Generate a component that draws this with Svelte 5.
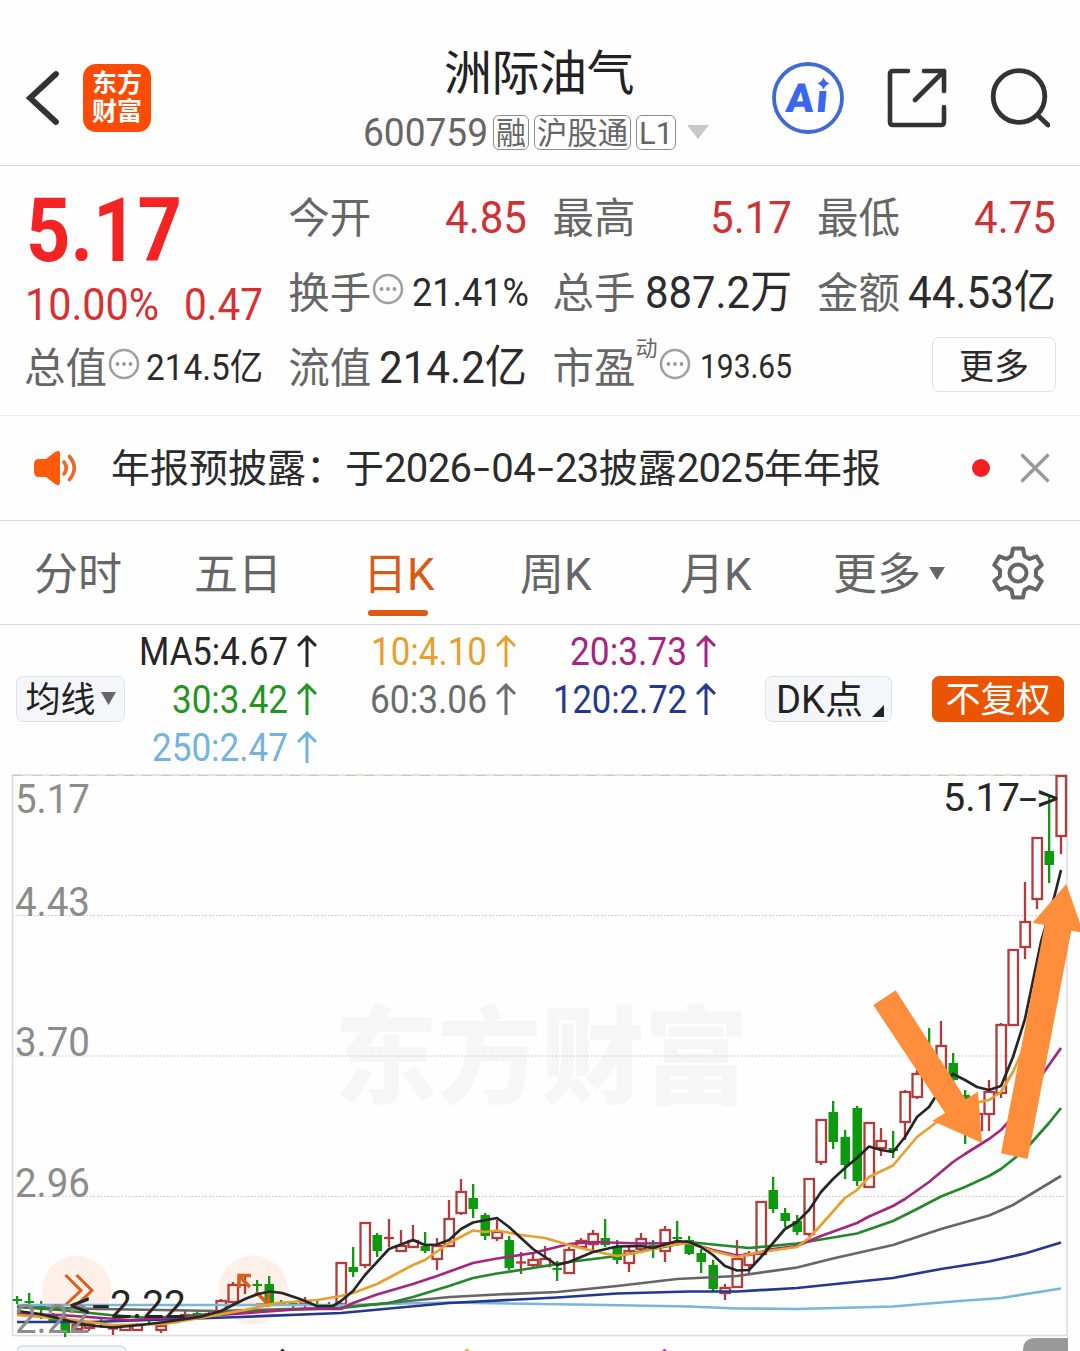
<script>
  const tags = [
    { text: '融', width: 30 },
    { text: '沪股通', width: 91 },
    { text: 'L1', width: 34 },
  ]

  const tabs = ['分时', '五日', '日K', '周K', '月K', '更多']
  let activeTab = $state('日K')

  const averages = [
    { text: 'MA5:4.67', width: 149, color: '#262626' },
    { text: '10:4.10', width: 116, color: '#e5a02f' },
    { text: '20:3.73', width: 117, color: '#a62580' },
    { text: '30:3.42', width: 116, color: '#1f961f' },
    { text: '60:3.06', width: 117, color: '#6b6b6b' },
    { text: '120:2.72', width: 134, color: '#24388f' },
    { text: '250:2.47', width: 136, color: '#72b4de' },
  ]

  const axis = [
    { text: '5.17', y: 813 },
    { text: '4.43', y: 916 },
    { text: '3.70', y: 1056 },
    { text: '2.96', y: 1197 },
    { text: '2.22', y: 1333 },
  ]

  // x, high, body top, body bottom, low, rising
  const candles = [
    [17, 1296, 1299, 1301, 1304, 0],
    [29, 1293, 1301, 1303, 1306, 0],
    [41, 1301, 1304, 1307, 1319, 0],
    [53, 1313, 1316, 1322, 1323, 0],
    [65, 1317, 1323, 1333, 1337, 0],
    [77, 1321, 1325, 1329, 1330, 1],
    [89, 1322, 1324, 1328, 1331, 1],
    [101, 1319, 1322, 1324, 1328, 0],
    [113, 1324, 1328, 1329, 1335, 1],
    [125, 1325, 1326, 1330, 1331, 1],
    [137, 1323, 1325, 1330, 1331, 1],
    [149, 1316, 1319, 1321, 1324, 0],
    [161, 1324, 1326, 1330, 1333, 1],
    [173, 1316, 1319, 1322, 1324, 1],
    [185, 1311, 1314, 1316, 1318, 1],
    [197, 1310, 1313, 1315, 1317, 0],
    [209, 1310, 1313, 1315, 1317, 1],
    [221, 1299, 1301, 1312, 1313, 1],
    [233, 1282, 1285, 1302, 1304, 1],
    [245, 1274, 1284, 1286, 1294, 1],
    [257, 1280, 1284, 1286, 1292, 0],
    [269, 1276, 1284, 1304, 1305, 0],
    [281, 1300, 1302, 1304, 1306, 0],
    [293, 1301, 1303, 1305, 1308, 0],
    [305, 1297, 1301, 1304, 1309, 1],
    [317, 1301, 1304, 1306, 1309, 0],
    [329, 1302, 1305, 1307, 1310, 1],
    [341, 1262, 1263, 1304, 1304, 1],
    [353, 1247, 1267, 1272, 1277, 0],
    [365, 1222, 1223, 1265, 1268, 1],
    [377, 1233, 1235, 1251, 1257, 0],
    [389, 1219, 1237, 1239, 1247, 1],
    [401, 1230, 1246, 1251, 1252, 1],
    [413, 1225, 1241, 1247, 1248, 1],
    [425, 1232, 1246, 1251, 1253, 0],
    [437, 1238, 1246, 1259, 1270, 1],
    [449, 1200, 1219, 1246, 1247, 1],
    [461, 1179, 1192, 1213, 1215, 1],
    [473, 1184, 1198, 1209, 1218, 0],
    [485, 1213, 1215, 1236, 1240, 0],
    [497, 1220, 1232, 1238, 1241, 1],
    [509, 1236, 1240, 1268, 1270, 0],
    [521, 1252, 1262, 1263, 1274, 1],
    [533, 1253, 1260, 1265, 1267, 1],
    [545, 1246, 1259, 1266, 1267, 1],
    [557, 1261, 1268, 1270, 1281, 0],
    [569, 1247, 1250, 1273, 1274, 1],
    [581, 1238, 1241, 1247, 1248, 1],
    [593, 1230, 1234, 1244, 1251, 1],
    [605, 1219, 1238, 1245, 1247, 0],
    [617, 1240, 1246, 1260, 1264, 0],
    [629, 1247, 1251, 1263, 1272, 1],
    [641, 1233, 1239, 1249, 1251, 1],
    [653, 1240, 1245, 1249, 1258, 0],
    [665, 1226, 1230, 1251, 1262, 1],
    [677, 1221, 1237, 1238, 1243, 0],
    [689, 1236, 1240, 1254, 1255, 0],
    [701, 1249, 1253, 1262, 1273, 0],
    [713, 1260, 1265, 1289, 1292, 0],
    [725, 1284, 1288, 1293, 1300, 1],
    [737, 1240, 1259, 1287, 1288, 1],
    [749, 1251, 1254, 1265, 1273, 1],
    [761, 1201, 1202, 1254, 1255, 1],
    [773, 1177, 1190, 1209, 1213, 0],
    [785, 1208, 1213, 1221, 1227, 0],
    [797, 1215, 1221, 1232, 1235, 0],
    [809, 1178, 1179, 1234, 1236, 1],
    [821, 1119, 1120, 1162, 1165, 1],
    [833, 1101, 1112, 1142, 1149, 0],
    [845, 1130, 1137, 1165, 1179, 0],
    [857, 1106, 1108, 1181, 1186, 0],
    [869, 1122, 1123, 1187, 1188, 1],
    [881, 1128, 1141, 1148, 1156, 1],
    [893, 1131, 1148, 1151, 1158, 0],
    [905, 1090, 1092, 1122, 1140, 1],
    [917, 1070, 1074, 1097, 1099, 1],
    [929, 1028, 1050, 1064, 1070, 0],
    [941, 1021, 1046, 1080, 1084, 1],
    [953, 1053, 1063, 1080, 1084, 0],
    [965, 1090, 1095, 1125, 1144, 0],
    [977, 1108, 1114, 1130, 1131, 1],
    [989, 1080, 1092, 1114, 1131, 1],
    [1001, 1023, 1025, 1093, 1098, 1],
    [1013, 949, 950, 1025, 1026, 1],
    [1025, 882, 922, 947, 959, 1],
    [1037, 837, 838, 899, 909, 1],
    [1049, 795, 851, 865, 883, 0],
    [1061, 775, 776, 836, 854, 1],
  ]

  const lines = [
    {
      color: '#7ab6d8',
      points: '17,1305 341,1305 449,1302.5 509,1303.5 605,1305 689,1306.5 737,1308.5 797,1309 893,1306.5 953,1301.5 1001,1298 1061,1288.5',
    },
    {
      color: '#24388f',
      points: '17,1322 90,1322 150,1320 240,1317 341,1313 449,1303 557,1297.5 617,1293.5 689,1291.5 737,1291.5 797,1288 893,1278 941,1269 989,1261.5 1025,1253.5 1061,1242.5',
    },
    {
      color: '#666666',
      points: '17,1307 100,1309 220,1311 341,1307.5 450,1297 497,1294.5 557,1292 617,1286 677,1279 737,1276 797,1267.5 833,1258.5 893,1245 941,1229 989,1215.5 1013,1205 1061,1176',
    },
    {
      color: '#22882a',
      points: '17,1307 60,1310 110,1315 150,1318 260,1311 341,1308 389,1303 413,1297 449,1286 473,1278 497,1273.5 533,1268 569,1262 617,1256 653,1249 689,1242 713,1244.5 749,1248 797,1243.5 857,1233.5 893,1221 917,1209 941,1196.5 965,1187 989,1176 1001,1169 1025,1150 1049,1123 1061,1108',
    },
    {
      color: '#a62580',
      points: '17,1314 60,1315 130,1320 220,1315 300,1309 341,1309 353,1303 377,1294.5 413,1284 437,1276 473,1263 497,1258.5 533,1253 569,1244 593,1242 641,1243.5 689,1243 713,1250 737,1255.5 749,1255 773,1249 797,1246 821,1236 857,1223 869,1216.5 893,1206 905,1199 929,1182 953,1162 965,1154 989,1139 1001,1130 1013,1117 1037,1082 1061,1048',
    },
    {
      color: '#e5a02f',
      points: '17,1315 65,1319 113,1325 165,1324 200,1318 245,1310 277,1303 317,1300 341,1296 353,1293 377,1284 413,1265 425,1260 449,1243 473,1230.5 485,1232 497,1230.5 521,1235 545,1238 569,1245 593,1251 617,1256 641,1252 665,1246 689,1243 713,1251 737,1257 761,1252 797,1247 809,1238 821,1225 845,1198 857,1190 869,1177 893,1165.5 917,1137 941,1119 965,1105 989,1100 1001,1092 1013,1072 1021,1054 1040,1000',
    },
    {
      color: '#262626',
      points: '17,1311 40,1314 65,1320 85,1325 113,1327.5 140,1325 165,1322 200,1317 221,1311 245,1299 258,1294 270,1291.5 282,1293 300,1299 317,1306 333,1306 341,1301 353,1291 365,1275 389,1249 413,1240 425,1245 437,1244.5 449,1240 461,1229 473,1222.5 497,1218 509,1227 533,1249 557,1265 569,1262 593,1252 617,1246.5 641,1246 653,1248 677,1241 689,1242 701,1247 713,1255 725,1266 737,1270.5 749,1270 761,1257 785,1229 797,1222 809,1210 821,1192 833,1179 845,1168 857,1158 869,1146.5 881,1150 893,1152 905,1137 917,1117 929,1107 941,1088 953,1074 965,1080 977,1087 989,1090 1001,1086 1013,1057 1025,1019 1041,942 1054,898 1061,870',
    },
  ]
</script>

<!-- text squeezed to a fixed width, so numbers keep their column -->
{#snippet num(text, width, size)}
  <svg class="num" {width} height={size} font-size={size}>
    <text x="0" y={size * 0.856} textLength={width} lengthAdjust="spacingAndGlyphs">{text}</text>
  </svg>
{/snippet}

{#snippet info()}
  <svg class="info" width="32" height="32" viewBox="0 0 32 32">
    <circle cx="16" cy="16" r="14" fill="none" stroke="#a0a0a0" stroke-width="2.6" />
    <circle cx="9.5" cy="16" r="1.9" />
    <circle cx="16" cy="16" r="1.9" />
    <circle cx="22.5" cy="16" r="1.9" />
  </svg>
{/snippet}

<div class="page">
  <header class="top">
    <div class="side">
      <svg width="36" height="60" viewBox="0 0 36 60" fill="none" stroke="#333" stroke-width="5.8" stroke-linecap="round">
        <polyline points="31,6 5,30 31,54" />
      </svg>
      <div class="logo"><span>东方</span><span>财富</span></div>
    </div>

    <div class="title">
      <h1>洲际油气</h1>
      <div class="sub">
        {@render num('600759', 125, 38)}
        <div class="tags">
          {#each tags as tag}
            <span class="tag">{@render num(tag.text, tag.width, 31)}</span>
          {/each}
        </div>
        <svg width="22" height="14" viewBox="0 0 22 14"><path d="M0 0h22L11 14z" fill="#c8c8c8" /></svg>
      </div>
    </div>

    <div class="side actions">
      <svg width="72" height="72" viewBox="0 0 72 72">
        <circle cx="36" cy="36" r="34" fill="none" stroke="#3f69d6" stroke-width="3.8" />
        <g class="ai" transform="translate(13 50) skewX(-5)">
          <text textLength="28" lengthAdjust="spacingAndGlyphs">A</text>
          <text x="30" textLength="12" lengthAdjust="spacingAndGlyphs">ı</text>
        </g>
        <path d="M51.500 15.500Q53.200 19.800 57.500 21.500Q53.200 23.200 51.500 27.500Q49.800 23.200 45.500 21.500Q49.800 19.800 51.500 15.500z" fill="#3a66f0" />
      </svg>
      <svg width="60" height="60" viewBox="0 0 60 60" fill="none" stroke="#333" stroke-width="4.6" stroke-linecap="round" stroke-linejoin="round">
        <path d="M21 3H6Q3 3 3 6V54Q3 57 6 57H54Q57 57 57 54V39" />
        <path d="M37 3H57V23M57 3L28 32" />
      </svg>
      <svg width="60" height="60" viewBox="0 0 60 60" fill="none" stroke="#333" stroke-width="4.8" stroke-linecap="round">
        <circle cx="29" cy="28.500" r="25.800" />
        <path d="M48 47.500L58 57" />
      </svg>
    </div>
  </header>

  <section class="quote">
    <div class="price">
      <div class="last">{@render num('5.17', 156, 89)}</div>
      <div class="change">
        {@render num('10.00%', 134, 44)}
        {@render num('0.47', 79, 44)}
      </div>
    </div>
    <div class="cell"><label>今开</label><b class="up">{@render num('4.85', 82, 45)}</b></div>
    <div class="cell"><label>最高</label><b class="up">{@render num('5.17', 82, 45)}</b></div>
    <div class="cell"><label>最低</label><b class="up">{@render num('4.75', 82, 45)}</b></div>
    <div class="cell wide"><label>换手</label>{@render info()}<b>{@render num('21.41%', 117, 38)}</b></div>
    <div class="cell"><label>总手</label><b>{@render num('887.2万', 147, 45)}</b></div>
    <div class="cell"><label>金额</label><b>{@render num('44.53亿', 148, 45)}</b></div>
    <div class="cell"><label>总值</label>{@render info()}<b>{@render num('214.5亿', 117, 36)}</b></div>
    <div class="cell"><label>流值</label><b>{@render num('214.2亿', 148, 45)}</b></div>
    <div class="cell"><label>市盈</label><sup>动</sup>{@render info()}<b>{@render num('193.65', 92, 33)}</b></div>
    <div class="cell"><button class="more">更多</button></div>
  </section>

  <section class="notice">
    <svg width="46" height="36" viewBox="0 0 46 36">
      <path d="M6 9H13L22 2Q27-1 27 4V32Q27 37 22 34L13 27H6Q1 27 1 22V14Q1 9 6 9z" fill="#ff5a0a" />
      <path d="M31 12Q35.500 18 31 24M36.500 6.500Q46 18 36.500 29.500" fill="none" stroke="#e8692a" stroke-width="3.600" stroke-linecap="round" />
    </svg>
    <p>年报预披露：于<i>2026<u>-</u>04<u>-</u>23</i>披露<i>2025</i>年年报</p>
    <span class="dot"></span>
    <svg width="30" height="30" viewBox="0 0 30 30" stroke="#999" stroke-width="3.400"><path d="M1.500 1.500L28.500 28.500M28.500 1.500L1.500 28.500" /></svg>
  </section>

  <nav class="tabs">
    {#each tabs as tab}
      <button class="tab" class:active={tab === activeTab} onclick={() => (activeTab = tab)}>
        <span>{tab}</span>
        {#if tab === '更多'}
          <svg width="16" height="13" viewBox="0 0 16 13"><path d="M0 0H16L8 13z" fill="#666" /></svg>
        {/if}
      </button>
    {/each}
    <svg width="54" height="54" viewBox="-27 -27 54 54" fill="none" stroke="#666" stroke-width="4" stroke-linejoin="round">
      <path d="M-6.500-17L-5-24.500H5L6.500-17L11.500-14.100L18.700-16.600L23.700-7.900L18-2.900V2.900L23.700 7.900L18.700 16.600L11.500 14.100L6.500 17L5 24.500H-5L-6.500 17L-11.500 14.100L-18.700 16.600L-23.700 7.900L-18 2.900V-2.900L-23.700-7.900L-18.700-16.600L-11.500-14.100z" />
      <circle r="8.500" />
    </svg>
  </nav>

  <section class="indicators">
    <button class="chip">
      <span>均线</span>
      <svg width="15" height="13" viewBox="0 0 15 13"><path d="M0 0H15L7.500 13z" fill="#666" /></svg>
    </button>
    <div class="averages">
      {#each averages as ma}
        <span style="color: {ma.color}">
          {@render num(ma.text, ma.width, 38)}
          <svg width="20" height="32" viewBox="0 0 20 32" fill="none" stroke="currentColor" stroke-width="3">
            <path d="M10 32V2M1 11L10 2L19 11" />
          </svg>
        </span>
      {/each}
    </div>
    <button class="chip dk">
      {@render num('DK点', 87, 38)}
      <svg width="12" height="12" viewBox="0 0 12 12"><path d="M12 0V12H0z" fill="#222" /></svg>
    </button>
    <button class="chip adjust"><span>不复权</span></button>
  </section>

  <svg class="chart" width="1080" height="579" viewBox="0 772 1080 579">
    <text class="watermark" x="334" y="1095" textLength="414" lengthAdjust="spacingAndGlyphs">东方财富</text>

    <g stroke="#c4c4c4" stroke-dasharray="1.500 2">
      <path d="M13 915.500H1067M13 1056H1067M13 1196.500H1067" />
    </g>
    <rect x="12.500" y="775" width="1054.500" height="560.500" fill="none" stroke="#dedede" stroke-width="1.600" />
    <path d="M13 775.500H1056" stroke="#d6c8a4" stroke-dasharray="10 8.500" />

    <circle cx="76.500" cy="1290" r="34.500" fill="#feefe8" />
    <circle cx="253" cy="1290" r="34.500" fill="#feefe8" />

    {#each candles as [x, high, top, bottom, low, rising]}
      {#if rising}
        <g fill="none" stroke="#b23c3c" stroke-width="2.300">
          <path d="M{x} {high}V{top}M{x} {bottom}V{low}" />
          {#if bottom - top < 3}
            <path d="M{x - 5} {(top + bottom) / 2}H{x + 5}" />
          {:else}
            <rect x={x - 4.5} y={top} width="9.500" height={bottom - top} />
          {/if}
        </g>
      {:else}
        <g fill="#0e9a0e">
          <rect x={x - 1} y={high} width="2.300" height={low - high} />
          <rect x={x - 4.5} y={top} width="9.500" height={Math.max(bottom - top, 2)} />
        </g>
      {/if}
    {/each}

    <g fill="none" stroke="#d8601c" stroke-width="3">
      <path d="M65.500 1275L81 1290.500L65.500 1305M76.500 1275L92 1290.500L76.500 1305" />
      <path d="M251 1275.500H239V1288M240 1277L250 1287M256 1305H268.500V1292M267 1303L256 1292" stroke-width="3.600" />
    </g>

    {#each lines as line}
      <polyline points={line.points} fill="none" stroke={line.color} stroke-width="2.700" stroke-linejoin="round" />
    {/each}

    {#each axis as label}
      <text class="axis" x="15" y={label.y} textLength="75" lengthAdjust="spacingAndGlyphs">{label.text}</text>
    {/each}

    <text class="mark" x="943" y="811" textLength="77" lengthAdjust="spacingAndGlyphs">5.17</text>
    <text class="mark" x="1019" y="811" textLength="18" lengthAdjust="spacingAndGlyphs">-</text>
    <text class="mark" x="1036" y="811" textLength="23" lengthAdjust="spacingAndGlyphs">&gt;</text>
    <text class="mark" x="69" y="1318" textLength="23" lengthAdjust="spacingAndGlyphs">&lt;</text>
    <text class="mark" x="92" y="1318" textLength="18" lengthAdjust="spacingAndGlyphs">-</text>
    <text class="mark" x="110" y="1318" textLength="76" lengthAdjust="spacingAndGlyphs">2.22</text>

    <g fill="#ff8e3c">
      <path d="M873.300 1005L895.700 990.300L965.700 1099.300L978 1091.700L982 1143L932.300 1120.700L945 1113z" />
      <path d="M1001 1153.300L1027.700 1159L1071.300 930.700L1083.500 933L1066.300 884L1032.700 922.700L1044.700 925z" />
    </g>

    <!-- upper edge of the volume panel -->
    <rect x="17" y="1346" width="109" height="45" rx="6" fill="#f5f6fa" stroke="#d8dade" stroke-width="1.500" />
    <path d="M1023 1351Q1023 1338 1036 1338H1068V1351z" fill="#999" />
    <path d="M280 1351L282.500 1348.500L285 1351z" fill="#262626" />
    <path d="M464.500 1351L467 1348.500L469.500 1351z" fill="#e5a02f" />
    <path d="M662 1351L664.500 1348.500L667 1351z" fill="#c02fb0" />
  </svg>
</div>

<style>
  :global(body) {
    margin: 0;
    background: #fefefe;
  }

  .page {
    width: 1080px;
    height: 1351px;
    overflow: hidden;
    font-family: Roboto, 'Noto Sans CJK SC', sans-serif;
    color: #2b2b2b;
  }

  svg { display: block; flex-shrink: 0; }
  .num { overflow: visible; fill: currentColor; }
  button {
    font: inherit;
    color: inherit;
    padding: 0;
    border: 0;
    background: none;
    cursor: pointer;
  }

  .top {
    box-sizing: border-box;
    height: 166px;
    padding: 31px 30px 0 25px;
    display: grid;
    grid-template-columns: 1fr 352px 1fr;
    align-items: center;
    border-bottom: 1.5px solid #d8d8d8;
  }
  .side { display: flex; align-items: center; gap: 22px; }
  .actions { justify-content: flex-end; gap: 43px; }
  .logo {
    width: 68px;
    height: 68px;
    border-radius: 13px;
    background: #fa4c06;
    color: #fff;
    font-size: 25px;
    font-weight: 700;
    line-height: 28px;
    display: flex;
    flex-direction: column;
    align-items: center;
    justify-content: center;
  }
  .title { margin-top: 10px; }
  h1 {
    margin: 0;
    padding-left: 3px;
    font-size: 48px;
    font-weight: 400;
    line-height: 58px;
    letter-spacing: -0.5px;
    text-align: center;
    color: #222;
  }
  .sub { height: 58px; padding-left: 1px; display: flex; align-items: center; color: #666; }
  .tags { display: flex; gap: 5px; margin: 0 11px 0 5px; }
  .tag {
    height: 33px;
    padding: 0 2px;
    border: 1.5px solid #8c8c8c;
    border-radius: 6px;
    display: flex;
    align-items: center;
  }
  .ai { font-size: 40px; font-weight: 900; fill: #3a66f0; }

  .quote {
    box-sizing: border-box;
    height: 250px;
    padding: 13px 25px 0;
    display: grid;
    grid-template-columns: repeat(4, 238px);
    grid-auto-rows: 75px;
    column-gap: 26.3px;
    border-bottom: 1.5px solid #ececec;
  }
  .price { grid-row: span 2; color: #f42424; }
  .last { padding: 6px 0 1px 1px; font-weight: 700; }
  .change { display: flex; justify-content: space-between; margin-top: 7px; color: #d83030; }
  .cell { display: flex; align-items: center; }
  .wide { margin-right: -2px; }
  label { margin: 3px 0 0 -1px; font-size: 41.5px; line-height: 75px; color: #666; }
  sup { align-self: flex-start; font-size: 22px; line-height: 40px; color: #666; }
  b { margin-left: auto; font-weight: 400; }
  .up { color: #cf3232; }
  .info { fill: #999; margin: 0 0 6px 1px; }
  .more {
    width: 124px;
    height: 55px;
    margin: 0 0 4px auto;
    padding-bottom: 5px;
    border: 1.5px solid #e2e2e2;
    border-radius: 7px;
    font-size: 35px;
  }

  .notice {
    box-sizing: border-box;
    height: 105px;
    padding: 0 30px 0 33px;
    display: flex;
    align-items: center;
    border-bottom: 1.5px solid #d4d6d8;
  }
  p { flex: 1; margin: 0 0 7px 32px; font-size: 39px; white-space: nowrap; }
  i { font-style: normal; font-size: 40px; letter-spacing: -0.65px; }
  u {
    display: inline-block;
    width: 20px;
    text-align: center;
    text-decoration: none;
    transform: scaleX(1.5);
  }
  .dot { width: 18px; height: 18px; margin-right: 30px; border-radius: 50%; background: #f42020; }

  .tabs {
    box-sizing: border-box;
    height: 104px;
    padding-left: 34px;
    display: grid;
    grid-template-columns: 160px 169px 157px 160px 153px 158px 54px;
    align-items: center;
    border-bottom: 1.5px solid #d4d6d8;
  }
  .tab {
    position: relative;
    height: 104px;
    display: flex;
    align-items: center;
    gap: 8px;
    font-size: 44px;
    color: #666;
  }
  .tab span { margin-bottom: 4px; }
  .tab.active { color: #d95a14; }
  .tab.active::after {
    content: '';
    position: absolute;
    left: 5px;
    bottom: 9px;
    width: 60px;
    height: 6px;
    border-radius: 3px;
    background: #dc5a14;
  }

  .indicators {
    height: 147px;
    padding: 0 16px;
    display: flex;
    align-items: center;
  }
  .chip {
    box-sizing: border-box;
    width: 109px;
    height: 46px;
    border: 1.5px solid #dfe2e8;
    border-radius: 7px;
    background: #f5f6fa;
    font-size: 35px;
    line-height: 40px;
    color: #222;
    display: flex;
    align-items: center;
    justify-content: center;
    gap: 5px;
  }
  .chip span { margin-top: 4px; }
  .dk { width: 127px; margin-left: 49px; padding-left: 3px; gap: 9px; }
  .dk svg:last-child { margin-top: 24px; }
  .adjust {
    width: 132px;
    margin-left: auto;
    border-color: #ea5504;
    background: #ea5504;
    color: #fff;
  }
  .averages {
    display: grid;
    grid-template-columns: 192px 199px 200px;
    grid-auto-rows: 48px;
  }
  .averages span { display: flex; align-items: center; justify-content: flex-end; gap: 9px; }

  .watermark { font-size: 106px; font-weight: 900; fill: #f6f6f6; }
  .axis { font-size: 40px; fill: #8c8c8c; }
  .mark { font-size: 39px; fill: #262626; }
</style>
